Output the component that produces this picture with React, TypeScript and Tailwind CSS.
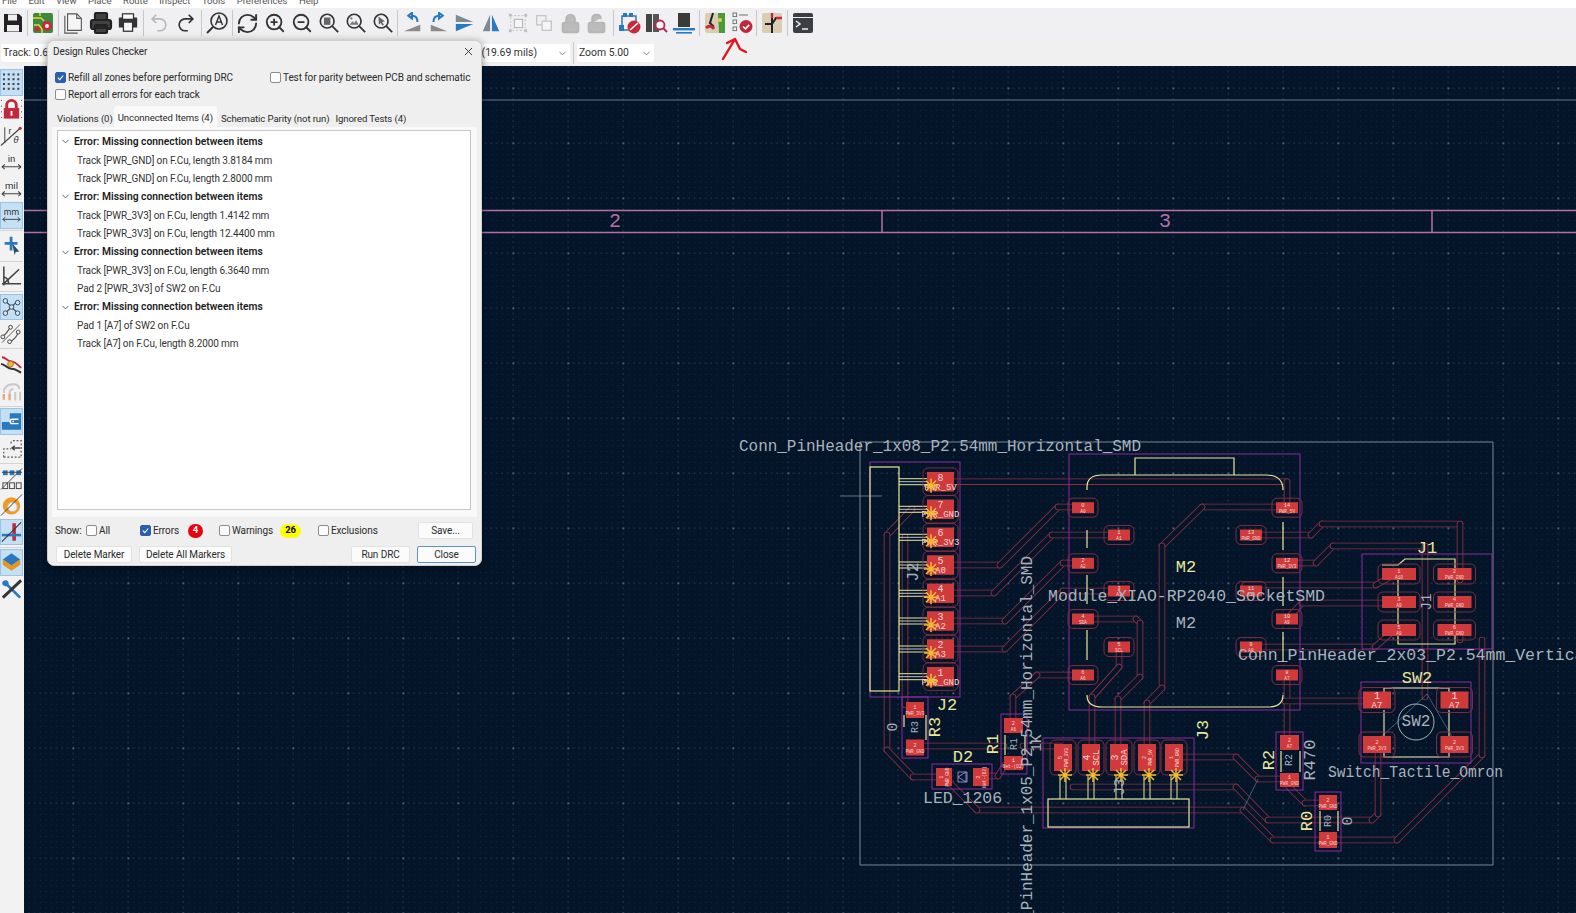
import { ChevronDown, Lock, LockOpen, Printer, RefreshCw, X, ZoomIn, ZoomOut } from "lucide-react";
import type { ReactNode } from "react";

const BG = "#04152a";
const TRACK = "#8a3040";
const COURT = "#8b2a9c";
const SILK = "#e8e79a";
const GREY = "#a9b2bb";

// ---------- small toolbar drawings ----------

function Ico({ children, size = 22 }: { children: ReactNode; size?: number }) {
  return (
    <svg width={size} height={size} viewBox="0 0 24 24" fill="none">
      {children}
    </svg>
  );
}

function Glass({ children }: { children?: ReactNode }) {
  return (
    <Ico>
      <circle cx="10" cy="10" r="7.5" stroke="#333" strokeWidth="1.8" />
      <path d="M15.5 15.5 22 22" stroke="#333" strokeWidth="2" />
      {children}
    </Ico>
  );
}

function Rotate({ flip }: { flip?: boolean }) {
  return (
    <Ico>
      <g transform={flip ? "translate(24 0) scale(-1 1)" : undefined}>
        <path d="M3 21 21 21 21 14Z" fill="#8a8a8a" />
        <path d="M8 4 12 1 12 7ZM12 4c4 0 6 3 6 7" stroke="#2a78c0" strokeWidth="2.2" fill="#2a78c0" fillOpacity="0" />
      </g>
    </Ico>
  );
}

const topIcons: Record<string, ReactNode> = {
  save: (
    <Ico size={24}>
      <path d="M3 3h15l3 3v15H3Z" fill="#222" />
      <rect x="7" y="3.5" width="9" height="6" fill="#eee" />
      <rect x="6" y="14" width="12" height="6.5" fill="#eee" />
    </Ico>
  ),
  board: (
    <Ico size={24}>
      <rect x="2" y="2" width="20" height="20" rx="2" fill="#3c8a3c" />
      <path d="M2 7h8l3 3M9 2v3M3 14h5l3 4v4" stroke="#e8d23a" strokeWidth="1.5" />
      <circle cx="16" cy="15" r="5" fill="#c92a3a" />
      <circle cx="16" cy="15" r="2" fill="#f2f2f2" />
      <circle cx="6" cy="18" r="2.6" fill="#c92a3a" />
    </Ico>
  ),
  page: (
    <Ico>
      <path d="M5 2h10l5 5v13H5Z" fill="#f6f6f6" stroke="#555" strokeWidth="1.2" />
      <path d="M15 2v5h5M2 4v19h14" stroke="#555" strokeWidth="1.2" />
    </Ico>
  ),
  print: <Printer size={24} color="#222" fill="#222" fillOpacity={0.85} strokeWidth={2.2} />,
  plot: (
    <Ico>
      <rect x="2" y="6" width="20" height="11" rx="1" fill="#333" />
      <rect x="6" y="2" width="12" height="6" fill="#fff" stroke="#333" strokeWidth="1.4" />
      <rect x="7" y="11" width="10" height="10" fill="#f4f4f4" stroke="#333" strokeWidth="1.4" />
    </Ico>
  ),
  undo: (
    <Ico>
      <path d="M9 3 4.5 7.5 9 12M5 7.5h8a6.5 6.5 0 0 1 0 13h-3" stroke="#b9b9b9" strokeWidth="1.8" />
    </Ico>
  ),
  redo: (
    <Ico>
      <path d="M15 3l4.5 4.5L15 12M19 7.5h-8a6.5 6.5 0 0 0 0 13h3" stroke="#333" strokeWidth="1.8" />
    </Ico>
  ),
  find: (
    <Ico size={24}>
      <circle cx="14" cy="10" r="8" stroke="#333" strokeWidth="1.6" />
      <path d="M8 16 2 22" stroke="#333" strokeWidth="2" />
      <path d="M10.5 14 14 5l3.5 9M11.7 11h4.6" stroke="#333" strokeWidth="1.4" />
    </Ico>
  ),
  refresh: <RefreshCw size={23} color="#333" strokeWidth={2} />,
  zin: <ZoomIn size={22} color="#333" strokeWidth={2} />,
  zout: <ZoomOut size={22} color="#333" strokeWidth={2} />,
  zfit: (
    <Glass>
      <rect x="6.5" y="6" width="7" height="8" fill="#666" />
    </Glass>
  ),
  zobj: (
    <Glass>
      <path d="M5 14l3-4 2 2 2-3 3 5Z" fill="#777" />
      <circle cx="7" cy="7" r="1.2" fill="#777" />
    </Glass>
  ),
  zsel: (
    <Glass>
      <path d="M7 5l7 5-3 1 2 3-1.5 1-2-3-2 2Z" fill="#666" />
    </Glass>
  ),
  rotl: <Rotate />,
  rotr: <Rotate flip />,
  mirh: (
    <Ico>
      <path d="M2 3 21 11 2 11Z" fill="#7c8a96" />
      <path d="M2 13h19L2 21Z" fill="#2a78c0" />
    </Ico>
  ),
  mirv: (
    <Ico>
      <path d="M11 3v18H3Z" fill="#7c8a96" />
      <path d="M13 3v18h8Z" fill="#2a78c0" />
    </Ico>
  ),
  group: (
    <Ico>
      <rect x="4" y="4" width="16" height="16" stroke="#c8c8c8" strokeWidth="1.2" strokeDasharray="2 2" />
      <rect x="2" y="2" width="3" height="3" fill="#bdbdbd" />
      <rect x="19" y="2" width="3" height="3" fill="#bdbdbd" />
      <rect x="2" y="19" width="3" height="3" fill="#bdbdbd" />
      <rect x="19" y="19" width="3" height="3" fill="#bdbdbd" />
      <rect x="8" y="8" width="9" height="9" fill="#f5f5f5" stroke="#bdbdbd" strokeWidth="1.4" />
    </Ico>
  ),
  ungroup: (
    <Ico>
      <rect x="4" y="4" width="10" height="10" stroke="#c4c4c4" strokeWidth="1.4" />
      <rect x="10" y="10" width="10" height="10" fill="#f5f5f5" stroke="#c4c4c4" strokeWidth="1.4" />
    </Ico>
  ),
  lock: <Lock size={21} color="#b5b5b5" fill="#b5b5b5" fillOpacity={0.9} strokeWidth={2.2} />,
  unlock: <LockOpen size={21} color="#b5b5b5" fill="#b5b5b5" fillOpacity={0.9} strokeWidth={2.2} />,
  netinsp: (
    <Ico size={24}>
      <path d="M4 5h14v14H4Z" stroke="#2a78c0" strokeWidth="1.5" />
      <rect x="5" y="2" width="4" height="4" fill="#2a78c0" />
      <rect x="11" y="2" width="4" height="4" fill="#2a78c0" />
      <rect x="1" y="14" width="5" height="6" fill="#2a78c0" />
      <circle cx="16" cy="16" r="6.5" fill="#c92a3a" />
      <path d="M12 19l8-7" stroke="#fff" strokeWidth="1.6" />
    </Ico>
  ),
  lib: (
    <Ico size={24}>
      <rect x="1" y="3" width="6" height="18" fill="#444" />
      <rect x="8" y="3" width="6" height="18" fill="#555" />
      <circle cx="15" cy="14" r="4.5" fill="#f5f5f5" stroke="#b02a55" strokeWidth="1.8" />
      <path d="M18 17l4 4" stroke="#b02a55" strokeWidth="2" />
    </Ico>
  ),
  stack: (
    <Ico size={24}>
      <rect x="6" y="2" width="12" height="14" fill="#3a3a3a" />
      <rect x="1" y="17" width="22" height="2.4" fill="#2a78c0" />
      <rect x="4" y="21" width="16" height="1.6" fill="#2a78c0" />
    </Ico>
  ),
  route: (
    <Ico size={24}>
      <rect x="2" y="2" width="20" height="20" rx="2" fill="#d9cdb4" />
      <path d="M15 2l7 0v20h-6Z" fill="#4a9a3c" />
      <path d="M10 2 7 12l4 4" stroke="#222" strokeWidth="2" />
      <path d="M3 17c3-3 6-2 8 1" stroke="#c92a3a" strokeWidth="3" />
      <circle cx="17" cy="9" r="2" fill="#e8d23a" />
    </Ico>
  ),
  drc: (
    <Ico size={24}>
      <rect x="3" y="2" width="3.6" height="3.6" stroke="#777" strokeWidth="1" />
      <rect x="3" y="9" width="3.6" height="3.6" stroke="#777" strokeWidth="1" />
      <rect x="3" y="16" width="3.6" height="3.6" stroke="#777" strokeWidth="1" />
      <path d="M9 4h9" stroke="#888" strokeWidth="1.2" />
      <circle cx="16" cy="15.5" r="6.5" fill="#c0283c" />
      <path d="M13 15.5l2.4 2.4 3.8-4" stroke="#fff" strokeWidth="1.7" />
    </Ico>
  ),
  pcbnew: (
    <Ico size={24}>
      <rect x="2" y="2" width="20" height="20" rx="2" fill="#d9cdb4" />
      <path d="M12 2v20M5 13h7l4-6h6" stroke="#222" strokeWidth="2" />
      <path d="M12 2v5M16 7h6" stroke="#c92a3a" strokeWidth="2.4" />
    </Ico>
  ),
  term: (
    <Ico size={24}>
      <rect x="2" y="2" width="20" height="20" rx="2" fill="#3b3f44" />
      <path d="M2 6.5h20" stroke="#eee" strokeWidth="1" />
      <path d="M5 10l4 3-4 3M11 18h6" stroke="#eee" strokeWidth="1.5" />
    </Ico>
  ),
};

type Tool = { key: string; active?: boolean; icon: ReactNode };

const unitTools: Tool[] = [
  {
    key: "grid",
    active: true,
    icon: (
      <svg width="22" height="22" viewBox="0 0 22 22">
        {[3, 8, 13, 18].map((y) =>
          [3, 8, 13, 18].map((x) => <rect key={`${x}-${y}`} x={x - 1} y={y - 1} width="2.2" height="2.2" fill="#3f4a55" />)
        )}
      </svg>
    ),
  },
  {
    key: "lockgrid",
    icon: (
      <Ico size={24}>
        <path d="M7 12V8a5 5 0 0 1 10 0v4" stroke="#c0283c" strokeWidth="3" />
        <rect x="4" y="11" width="16" height="11" fill="#c0283c" />
        <rect x="11" y="14" width="2" height="5" fill="#fff" />
        <path d="M1 3h1M1 9h1M1 15h1M1 21h1M22 3h1M22 9h1M22 15h1M22 21h1" stroke="#444" />
      </Ico>
    ),
  },
  {
    key: "polar",
    icon: (
      <svg width="24" height="24" viewBox="0 0 24 24" fill="none">
        <path d="M1 23 21 5" stroke="#444" strokeWidth="1.2" />
        <path d="M5 4v16" stroke="#444" />
        <circle cx="21" cy="5" r="1.6" fill="#c0283c" />
        <text x="9" y="11" fontSize="9" fill="#333" fontFamily="Liberation Sans, sans-serif">r</text>
        <text x="14" y="20" fontSize="9" fontStyle="italic" fill="#333" fontFamily="DejaVu Sans, sans-serif">θ</text>
      </svg>
    ),
  },
  ...["in", "mil", "mm"].map((u) => ({
    key: u,
    active: u === "mm",
    icon: (
      <svg width="24" height="24" viewBox="0 0 24 24" fill="none">
        <text x="12" y="12" textAnchor="middle" fontSize="10" fill="#333" fontFamily="Roboto, sans-serif">{u}</text>
        <path d="M2 17h20M2 17l3-2.4M2 17l3 2.4M22 17l-3-2.4M22 17l-3 2.4" stroke="#444" strokeWidth="1.1" />
      </svg>
    ),
  })),
];

const cursorTool: Tool = {
  key: "cursor",
  icon: (
    <Ico>
      <path d="M11 2v15M4 9h14" stroke="#2a78c0" strokeWidth="3" />
      <path d="M12 9l8 9-4 .6L15 22Z" fill="#26506f" />
    </Ico>
  ),
};

const axesTool: Tool = {
  key: "axes",
  icon: (
    <Ico size={24}>
      <path d="M4 2v20M2 20h20M4 20 20 5M4 13c4 1 5 4 5 7" stroke="#444" strokeWidth="1.6" />
    </Ico>
  ),
};

const netTools: Tool[] = [
  {
    key: "ratsnest",
    active: true,
    icon: (
      <Ico>
        <path d="M5 5l14 14M19 5 5 19" stroke="#2d3e50" strokeWidth="1.3" />
        <circle cx="5" cy="5" r="2.6" fill="#cfe4f6" stroke="#2d3e50" />
        <circle cx="19" cy="7" r="2.6" fill="#cfe4f6" stroke="#2d3e50" />
        <circle cx="12" cy="12" r="2.6" fill="#cfe4f6" stroke="#2d3e50" />
        <circle cx="5" cy="19" r="2.6" fill="#cfe4f6" stroke="#2d3e50" />
        <circle cx="19" cy="19" r="2.6" fill="#cfe4f6" stroke="#2d3e50" />
      </Ico>
    ),
  },
  {
    key: "curved",
    icon: (
      <Ico size={24}>
        <path d="M2 21 21 2" stroke="#555" strokeWidth="1" />
        <path d="M3 14c3-1 5-5 7-8M10 20c4-1 7-5 9-9" stroke="#555" strokeWidth="1.2" />
        <circle cx="3" cy="15" r="2" fill="#f0f0f0" stroke="#444" />
        <circle cx="11" cy="5" r="2" fill="#f0f0f0" stroke="#444" />
        <circle cx="10" cy="20" r="2" fill="#f0f0f0" stroke="#444" />
        <circle cx="19" cy="10" r="2" fill="#f0f0f0" stroke="#444" />
      </Ico>
    ),
  },
];

const routeTools: Tool[] = [
  {
    key: "route",
    icon: (
      <Ico size={24}>
        <path d="M2 5c4 0 6 4 9 4s6 2 11 7" stroke="#c0283c" strokeWidth="2" />
        <path d="M1 12c4 0 7 5 11 5s6 2 10 4" stroke="#333" strokeWidth="2" />
        <circle cx="11" cy="12" r="3" fill="#e8b93a" stroke="#b5792a" />
      </Ico>
    ),
  },
  {
    key: "tune",
    icon: (
      <Ico size={24}>
        <path d="M4 14c0-7 5-9 10-9s6 2 6 5M10 22v-8c0-3 2-4 4-4M16 22v-9M21 22v-9" stroke="#c8c8c8" strokeWidth="2" />
        <path d="M4 15v6M10 15v6" stroke="#f0a878" strokeWidth="2.4" />
      </Ico>
    ),
  },
];

const zoneTools: Tool[] = [
  {
    key: "zone",
    active: true,
    icon: (
      <Ico>
        <path d="M1 22V13h9V3h13v19Z" fill="#2a78c0" />
        <path d="M20 10h-7a2.5 2.5 0 0 0 0 5h7" stroke="#fff" strokeWidth="1.6" />
        <circle cx="14" cy="12.5" r="1" fill="#fff" />
      </Ico>
    ),
  },
  {
    key: "zoneout",
    icon: (
      <Ico>
        <path d="M3 22V13h8M11 5v4M13 4h9v18H3" stroke="#555" strokeWidth="1.3" strokeDasharray="2 2" />
        <path d="M21 12h-8M15 9.5 12 12l3 2.5" stroke="#444" strokeWidth="1.6" />
      </Ico>
    ),
  },
];

const padTools: Tool[] = [
  {
    key: "pads",
    icon: (
      <Ico size={24}>
        <rect x="3" y="3" width="5" height="5" fill="#2a78c0" />
        <rect x="10" y="3" width="5" height="5" fill="#2a78c0" />
        <rect x="17" y="3" width="5" height="5" fill="#2a78c0" />
        <path d="M2 5h21M1 23 23 1" stroke="#444" strokeWidth="1" />
        <rect x="3" y="16" width="5" height="6" stroke="#444" />
        <rect x="10" y="16" width="5" height="6" stroke="#444" />
        <rect x="17" y="16" width="5" height="6" stroke="#444" />
      </Ico>
    ),
  },
  {
    key: "via",
    icon: (
      <Ico size={24}>
        <circle cx="12" cy="13" r="9" fill="#f09a20" />
        <circle cx="13" cy="14" r="5" fill="#f0f0f0" stroke="#bbb" />
        <path d="M1 23 23 1" stroke="#444" strokeWidth="1" />
      </Ico>
    ),
  },
  {
    key: "tracks",
    active: true,
    icon: (
      <Ico size={22}>
        <path d="M13 2h4v20h-4Z" fill="#c0283c" />
        <path d="M1 14h22v3H1Z" fill="#2a78c0" />
        <path d="M1 23 23 1" stroke="#333" strokeWidth="1.2" />
      </Ico>
    ),
  },
];

const lastTools: Tool[] = [
  {
    key: "layers",
    active: true,
    icon: (
      <Ico size={22}>
        <path d="M12 2 22 9 12 16 2 9Z" fill="#2a78c0" />
        <path d="M2 9v6l10 7 10-7V9L12 16Z" fill="#e8951d" />
      </Ico>
    ),
  },
  {
    key: "tools",
    icon: (
      <Ico size={24}>
        <path d="M3 4c3-3 7 0 6 3l13 13-2 2L7 9C4 10 1 7 3 4Z" fill="#2a78c0" />
        <path d="M22 3 3 21" stroke="#333" strokeWidth="3" />
      </Ico>
    ),
  },
];

const sideGroups = [unitTools, [cursorTool], [axesTool], netTools, routeTools, zoneTools, padTools, lastTools];

// ---------- chrome ----------

function TopBtn({ name, w = "w-[27px]" }: { name: string; w?: string }) {
  return <div className={`flex h-full shrink-0 items-center justify-center ${w}`}>{topIcons[name]}</div>;
}

function Sep({ w = "w-[4px]" }: { w?: string }) {
  return (
    <div className={`flex h-full shrink-0 items-center justify-center ${w}`}>
      <div className="h-[26px] w-px bg-[#c8c8c8]" />
    </div>
  );
}

function Combo({ text, className }: { text: string; className: string }) {
  return (
    <div className={`flex h-[18px] shrink-0 items-center justify-between rounded-[2px] bg-white pl-[2px] pr-[2px] ${className}`}>
      <span className="whitespace-nowrap">{text}</span>
      <ChevronDown size={11} color="#777" />
    </div>
  );
}

function Check({ on, label, className = "" }: { on?: boolean; label: string; className?: string }) {
  return (
    <div className={`flex items-center gap-[2px] ${className}`}>
      <div
        className={`flex h-[11px] w-[11px] shrink-0 items-center justify-center rounded-[2px] border ${
          on ? "border-[#2a5fb0] bg-[#2a5fb0]" : "border-[#8d8d8d] bg-[#fbfbfb]"
        }`}
      >
        {on && (
          <svg width="9" height="9" viewBox="0 0 10 10" fill="none">
            <path d="M2 5.2 4.2 7.4 8 2.8" stroke="#fff" strokeWidth="1.2" />
          </svg>
        )}
      </div>
      <span className="whitespace-nowrap">{label}</span>
    </div>
  );
}

function Btn({ label, className, blue }: { label: string; className: string; blue?: boolean }) {
  return (
    <div
      className={`flex h-[17px] shrink-0 items-center justify-center rounded-[2px] border bg-[#fbfbfb] ${
        blue ? "border-[#5b93c4]" : "border-[#e2e2e2]"
      } ${className}`}
    >
      {label}
    </div>
  );
}

const groups = [
  ["Track [PWR_GND] on F.Cu, length 3.8184 mm", "Track [PWR_GND] on F.Cu, length 2.8000 mm"],
  ["Track [PWR_3V3] on F.Cu, length 1.4142 mm", "Track [PWR_3V3] on F.Cu, length 12.4400 mm"],
  ["Track [PWR_3V3] on F.Cu, length 6.3640 mm", "Pad 2 [PWR_3V3] of SW2 on F.Cu"],
  ["Pad 1 [A7] of SW2 on F.Cu", "Track [A7] on F.Cu, length 8.2000 mm"],
];

function DrcDialog() {
  return (
    <div className="absolute left-[47px] top-[40px] flex h-[526px] w-[435px] flex-col rounded-[7px] border border-[#cfcfcf] bg-[#efefef] text-[10px] tracking-[-0.1px] text-[#2b2b2b] shadow-[0_2px_8px_rgba(0,0,0,0.45)]">
      <div className="flex h-[21px] shrink-0 items-center justify-between pl-[5px] pr-[6px]">
        <span>Design Rules Checker</span>
        <X size={13} color="#222" strokeWidth={1.6} />
      </div>
      <div className="mt-[6px] flex h-[18px] shrink-0 items-center pl-[7px]">
        <Check on label="Refill all zones before performing DRC" className="w-[215px]" />
        <Check label="Test for parity between PCB and schematic" />
      </div>
      <div className="flex h-[16px] shrink-0 items-center pl-[7px]">
        <Check label="Report all errors for each track" />
      </div>
      <div className="mt-[4px] flex h-[21px] shrink-0 items-start pl-[5px] text-[9.6px]">
        <div className="shrink-0 pl-[4px] pr-[1px] pt-[7px] leading-[12px]">Violations (0)</div>
        <div className="h-[21px] shrink-0 rounded-t-[3px] bg-[#fafafa] px-[4px] pt-[6px] leading-[12px]">Unconnected Items (4)</div>
        <div className="ml-[1px] shrink-0 px-[3px] pt-[7px] leading-[12px]">Schematic Parity (not run)</div>
        <div className="shrink-0 px-[3px] pt-[7px] leading-[12px]">Ignored Tests (4)</div>
      </div>
      <div className="mx-[4px] flex h-[390px] shrink-0 bg-[#f9f9f9] px-[5px] pb-[7px] pt-[3px]">
        <div className="h-full w-[414px] border border-[#c6c6c6] bg-white pt-[1.5px]">
          {groups.map((g, i) => (
            <div key={i}>
              <div className="flex h-[18.4px] items-center text-[10.3px] font-semibold tracking-normal text-[#1c1c1c]">
                <ChevronDown size={11} color="#555" className="ml-[2px] mr-[3px]" />
                <span>Error: Missing connection between items</span>
              </div>
              {g.map((t) => (
                <div key={t} className="flex h-[18.4px] items-center pl-[19px] text-[#333]">
                  {t}
                </div>
              ))}
            </div>
          ))}
        </div>
      </div>
      <div className="flex h-[26px] shrink-0 items-center pl-[7px] pt-[1px]">
        <span className="w-[31px]">Show:</span>
        <Check label="All" className="w-[54px]" />
        <Check on label="Errors" className="w-[48px]" />
        <div className="flex h-[14px] w-[15px] items-center justify-center rounded-full bg-[#e8000f] text-[9.5px] font-bold text-white">4</div>
        <Check label="Warnings" className="ml-[16px] w-[61px]" />
        <div className="flex h-[14px] w-[21px] items-center justify-center rounded-full bg-[#ffff00] text-[9.5px] font-bold text-black">26</div>
        <Check label="Exclusions" className="ml-[17px] w-[100px]" />
        <Btn label="Save..." className="w-[55px]" />
      </div>
      <div className="flex h-[23px] shrink-0 items-center pl-[8px] pr-[5px]">
        <Btn label="Delete Marker" className="w-[76px]" />
        <Btn label="Delete All Markers" className="ml-[7px] w-[93px]" />
        <Btn label="Run DRC" className="ml-auto w-[59px]" />
        <Btn label="Close" blue className="ml-[7px] w-[59px]" />
      </div>
    </div>
  );
}

// ---------- the board ----------

// split an M/H/V/L path into straight runs, so each run gets its own round ends like KiCad's outline mode
function segments(d: string) {
  const tokens = d.match(/[MHVL]|-?[\d.]+/g) ?? [];
  const pts: [number, number][] = [];
  let cmd = "M";
  let i = 0;
  while (i < tokens.length) {
    if (/[MHVL]/.test(tokens[i])) cmd = tokens[i++];
    const last = pts[pts.length - 1];
    if (cmd === "H") pts.push([Number(tokens[i++]), last[1]]);
    else if (cmd === "V") pts.push([last[0], Number(tokens[i++])]);
    else {
      pts.push([Number(tokens[i]), Number(tokens[i + 1])]);
      i += 2;
    }
  }
  return pts.slice(1).map((p, k) => [pts[k], p]);
}

function Track({ d }: { d: string }) {
  return (
    <g strokeLinecap="round">
      {segments(d).map(([a, b], k) => (
        <g key={k}>
          <line x1={a[0]} y1={a[1]} x2={b[0]} y2={b[1]} stroke={TRACK} strokeWidth="6.6" />
          <line x1={a[0]} y1={a[1]} x2={b[0]} y2={b[1]} stroke={BG} strokeWidth="4.8" />
        </g>
      ))}
    </g>
  );
}

function Pad({
  x, y, w, h, n, net, big, vert, halo = true,
}: {
  x: number; y: number; w: number; h: number; n?: string; net?: string; big?: boolean; vert?: boolean; halo?: boolean;
}) {
  const numSize = big ? 10 : 5.5;
  const netSize = big ? 9 : 4.5;
  return (
    <g>
      {halo && (
        <rect x={x - w / 2 - 4} y={y - h / 2 - 4} width={w + 8} height={h + 8} rx="5" fill="none" stroke={TRACK} strokeWidth="0.9" />
      )}
      <rect x={x - w / 2} y={y - h / 2} width={w} height={h} fill="#d03a3a" />
      <g
        fill="#f5d9d9"
        fontFamily="Liberation Mono, monospace"
        textAnchor="middle"
        transform={vert ? `rotate(-90 ${x} ${y})` : undefined}
      >
        <text x={x} y={y - 1} fontSize={numSize}>{n}</text>
        <text x={x} y={y + (big ? 8 : 5)} fontSize={netSize}>{net}</text>
      </g>
    </g>
  );
}

function Label({
  x, y, t, len, size = 16, fill = GREY, rot,
}: {
  x: number; y: number; t: string; len?: number; size?: number; fill?: string; rot?: boolean;
}) {
  return (
    <text
      x={x}
      y={y}
      fill={fill}
      fontSize={size}
      fontFamily="Liberation Mono, monospace"
      textLength={len}
      lengthAdjust={len ? "spacingAndGlyphs" : undefined}
      dominantBaseline="central"
      textAnchor={len ? "start" : "middle"}
      transform={rot ? `rotate(-90 ${x} ${y})` : undefined}
    >
      {t}
    </text>
  );
}

function Star({ x, y }: { x: number; y: number }) {
  return (
    <path
      d={`M${x - 5} ${y - 5}l10 10M${x - 5} ${y + 5}l10 -10M${x} ${y - 7}v14M${x - 7} ${y}h14`}
      stroke="#f0bd32"
      strokeWidth="1.5"
    />
  );
}

const j2 = [
  [481.7, "8", "PWR_5V"], [509.3, "7", "PWR_GND"], [537.3, "6", "PWR_3V3"], [565, "5", "A0"],
  [593.3, "4", "A1"], [621, "3", "A2"], [649, "2", "A3"], [676.7, "1", "PWR_GND"],
] as const;

const j3 = [
  [1063, "5", "PWR_3V3"], [1091, "4", "SCL"], [1119, "3", "SDA"], [1147, "2", "PWR_5V"], [1174, "1", "PWR_GND"],
] as const;

const m2 = [
  [1083, 507.7, "0", "A0"], [1119, 535, "1", "A1"], [1083, 563.3, "2", "A2"], [1119, 591, "3", "A3"],
  [1083, 619, "4", "SDA"], [1119, 647, "5", "SCL"], [1083, 675, "6", "A6"],
  [1287, 507.7, "14", "PWR_5V"], [1251, 535, "13", "PWR_GND"], [1287, 563.3, "12", "PWR_3V3"], [1251, 591, "11", "A10"],
  [1287, 619, "10", "A9"], [1251, 647, "9", "A8"], [1287, 675, "8", "A7"],
] as const;

const j1 = [
  [1399, 574, "1", "A10"], [1454.5, 574, "2", "PWR_GND"], [1399, 602, "3", "A9"],
  [1454.5, 602, "4", "PWR_GND"], [1399, 630, "5", "A8"], [1454.5, 630, "6", "PWR_GND"],
] as const;

const tracks = [
  "M940 481.7H1287V507",
  "M945 565H1000L1058 507H1080",
  "M945 593H994L1052 535H1115",
  "M945 621H1005L1063 563H1080",
  "M945 649H1005L1063 591H1115",
  "M930 509H912L887 535V750L913 777H945",
  "M905 537V705",
  "M1080 675H1037L1013 697V725",
  "M1083 619H1136L1140 623V677L1118 699V750",
  "M1119 647V667L1092 697V750",
  "M1276 507H1202L1162 546V688L1147 703V750",
  "M1245 535H1311L1322 524H1460V580",
  "M1287 563H1316L1333 546H1425V697",
  "M1245 585H1376L1395 574",
  "M1287 619L1302 603H1395",
  "M1251 647H1375L1392 632",
  "M1287 680V745",
  "M1285 701H1375",
  "M924 746H1004",
  "M1023 746H1060",
  "M985 776H998L1005 765H1010",
  "M1180 757H1236L1258 779H1285",
  "M1073 787H1236L1268 820H1372L1378 814V745",
  "M977 810H1243L1273 840H1397L1482 755V640",
  "M977 810L945 778",
  "M1289 787L1305 803H1325",
  "M1460 630V640",
];

function PcbCanvas() {
  return (
    <svg className="block h-[847px] w-[1552px]" viewBox="24 66 1552 847">
      <defs>
        <pattern id="fine" x="18" y="33" width="5.5" height="5.5" patternUnits="userSpaceOnUse">
          <rect width="0.9" height="0.9" fill="#17293d" />
        </pattern>
        <pattern id="major" x="17.5" y="32.5" width="55" height="55" patternUnits="userSpaceOnUse">
          <path d="M0.5 0V55" stroke="#32465a" strokeWidth="1" strokeDasharray="1 4.5" />
          <path d="M0 0.5H55" stroke="#32465a" strokeWidth="1" strokeDasharray="1 4.5" />
          <rect width="1.5" height="1.5" fill="#8593a0" />
        </pattern>
      </defs>
      <rect x="24" y="66" width="1552" height="847" fill={BG} />
      <rect x="24" y="66" width="1552" height="847" fill="url(#fine)" />
      <rect x="24" y="66" width="1552" height="847" fill="url(#major)" />

      {/* sheet frame */}
      <path d="M24 100H1576" stroke="#66798b" strokeWidth="1" />
      <path d="M24 210.5H1576M24 232.5H1576M882 210V232M1432 210V232" stroke="#b66fa3" strokeWidth="1.5" />
      <Label x={615} y={221} t="2" size={20} fill="#b66fa3" />
      <Label x={1165} y={221} t="3" size={20} fill="#b66fa3" />

      {/* board edge */}
      <path d="M860 442H1493V865H860Z" fill="none" stroke="#7b8894" strokeWidth="1" />
      <path d="M840 496H882" stroke="#7b8894" strokeWidth="0.8" />

      {tracks.map((d) => (
        <Track key={d} d={d} />
      ))}
      <path d="M1258 779 1243 810M1427 694 1455 742M1376 742 1427 694" stroke="#4d7d93" strokeWidth="0.7" fill="none" />

      {/* courtyards */}
      <g fill="none" stroke={COURT} strokeWidth="1">
        <rect x="870" y="462" width="90" height="235" />
        <rect x="1069" y="454" width="231" height="256" />
        <rect x="1362" y="554" width="130" height="95" />
        <rect x="1361" y="682" width="110" height="81" />
        <rect x="1043" y="738" width="151" height="90" />
        <rect x="902" y="697" width="26" height="61" />
        <rect x="1001" y="714" width="26" height="60" />
        <rect x="932" y="764" width="60" height="25" />
        <rect x="1276" y="732" width="27" height="58" />
        <rect x="1315" y="792" width="26" height="59" />
      </g>

      {/* silk and fab */}
      <g fill="none" stroke={SILK} strokeWidth="1.2">
        <rect x="870" y="467" width="29" height="224" />
        <path d="M1135 475V458H1234V475" />
        <path d="M1087 490V487Q1087 475 1102 475H1266Q1283 475 1283 490M1087 695Q1087 707 1102 707H1268Q1283 707 1283 695" />
        <path d="M1087 530V548M1087 575V604M1087 630V660M1283 522V550M1283 577V606M1283 632V662" />
        <path d="M1382 565H1398L1405 559H1455V644H1398V570" />
        <rect x="1048" y="799" width="141" height="28" />
        <path d="M904 727V715M926 715V740M1005 735V755M1025 735V755M1281 751V772M1300 751V772M1320 811V831M1338 811V831" />
      </g>
      <path d="M1384 698V688H1449V698M1384 710V736M1449 710V736M1384 750V757H1449V750" fill="none" stroke="#a8a88e" strokeWidth="1.6" />
      <circle cx="1416" cy="722" r="18" fill="none" stroke={GREY} strokeWidth="1" />
      {j2.map(([y]) => (
        <path key={y} d={`M899 ${y - 3}H927M899 ${y + 3}H927`} stroke={SILK} strokeWidth="1" />
      ))}
      {j2.map(([y]) => (
        <path key={y} d={`M899 ${y}H927`} stroke="#eeeeee" strokeWidth="0.8" />
      ))}
      {j3.map(([x]) => (
        <path key={x} d={`M${x - 3} 775V799M${x + 3} 775V799`} stroke={SILK} strokeWidth="1" />
      ))}

      {/* pads */}
      {j2.map(([y, n, net]) => (
        <Pad key={n} x={940.5} y={y} w={27} h={19.5} n={n} net={net} big />
      ))}
      {j3.map(([x, n, net]) => (
        <Pad key={n} x={x} y={757.5} w={18} h={27} n={n} net={net} big={net.length < 4} vert />
      ))}
      {m2.map(([x, y, n, net]) => (
        <Pad key={n} x={x} y={y} w={22} h={11} n={n} net={net} />
      ))}
      {j1.map(([x, y, n, net]) => (
        <Pad key={n} x={x} y={y} w={34} h={12} n={n} net={net} />
      ))}
      <Pad x={1377} y={700} w={28} h={17} n="1" net="A7" big />
      <Pad x={1454.5} y={700} w={28} h={17} n="1" net="A7" big />
      <Pad x={1377} y={744.5} w={28} h={17} n="2" net="PWR_3V3" />
      <Pad x={1454.5} y={744.5} w={28} h={17} n="2" net="PWR_3V3" />
      <Pad x={915} y={710} w={18} h={16} n="1" net="PWR_3V3" halo={false} />
      <Pad x={915} y={747.5} w={18} h={16} n="2" net="PWR_GND" halo={false} />
      <Pad x={1013.5} y={725.5} w={19} h={15} n="2" net="A6" halo={false} />
      <Pad x={1013.5} y={763} w={19} h={14} n="1" net="Net-(D2)" halo={false} />
      <Pad x={944} y={777} w={16} h={18} n="1" net="PWR_GND" vert halo={false} />
      <Pad x={981} y={777} w={16} h={18} n="2" net="Net-(D2)" vert halo={false} />
      <Pad x={1289.5} y={742.5} w={19} h={15} n="2" net="A7" halo={false} />
      <Pad x={1289.5} y={780} w={19} h={14} n="1" net="PWR_GND" halo={false} />
      <Pad x={1328} y={802.5} w={18} h={15} n="2" net="PWR_GND" halo={false} />
      <Pad x={1328} y={840} w={18} h={16} n="1" net="PWR_GND" halo={false} />
      <path d="M958 772H967V782H958ZM958 777 966 772V782Z" fill="none" stroke="#9a8fd0" strokeWidth="0.9" />

      {j2.map(([y]) => (
        <Star key={y} x={931} y={y + 4} />
      ))}
      {j3.map(([x]) => (
        <Star key={x} x={x + 2} y={775} />
      ))}

      {/* texts */}
      <Label x={739} y={447} t="Conn_PinHeader_1x08_P2.54mm_Horizontal_SMD" len={402} />
      <Label x={1048} y={597} t="Module_XIAO-RP2040_SocketSMD" len={277} />
      <Label x={1186} y={623} t="M2" size={17} />
      <Label x={1186} y={567} t="M2" size={17} fill={SILK} />
      <Label x={1238} y={656} t="Conn_PinHeader_2x03_P2.54mm_Vertical_SMD" len={396} />
      <Label x={1328} y={773} t="Switch_Tactile_Omron" len={175} />
      <Label x={923} y={799} t="LED_1206" len={79} />
      <Label x={963} y={757} t="D2" size={17} fill={SILK} />
      <Label x={1417} y={678} t="SW2" size={17} fill={SILK} />
      <Label x={1416} y={722} t="SW2" size={16} />
      <Label x={1427} y={548} t="J1" size={17} fill={SILK} />
      <Label x={1427} y={602} t="J1" size={14} rot />
      <Label x={947} y={705} t="J2" size={17} fill={SILK} />
      <Label x={914} y={572} t="J2" size={16} rot />
      <Label x={1203} y={730} t="J3" size={17} fill={SILK} rot />
      <Label x={1120} y={787} t="J3" size={14} rot />
      <text
        x={1028}
        y={958}
        fill={GREY}
        fontSize={16}
        fontFamily="Liberation Mono, monospace"
        textLength={402}
        lengthAdjust="spacingAndGlyphs"
        dominantBaseline="central"
        transform="rotate(-90 1028 958)"
      >
        Conn_PinHeader_1x05_P2.54mm_Horizontal_SMD
      </text>
      <Label x={1037} y={743} t="1K" size={14} rot />
      <Label x={993} y={744} t="R1" size={17} fill={SILK} rot />
      <Label x={1014} y={744} t="R1" size={10} rot />
      <Label x={935} y={727} t="R3" size={17} fill={SILK} rot />
      <Label x={915} y={727} t="R3" size={10} rot />
      <Label x={893} y={727} t="0" size={15} rot />
      <Label x={1269} y={760} t="R2" size={17} fill={SILK} rot />
      <Label x={1289} y={760} t="R2" size={10} rot />
      <Label x={1310} y={760} t="R470" size={17} rot />
      <Label x={1307} y={821} t="R0" size={17} fill={SILK} rot />
      <Label x={1328} y={821} t="R0" size={10} rot />
      <Label x={1348} y={821} t="0" size={15} rot />
    </svg>
  );
}

function SideBtn({ active, icon }: { active?: boolean; icon: ReactNode }) {
  return (
    <div
      className={`flex h-[26.6px] w-[23px] shrink-0 items-center justify-center overflow-hidden ${
        active ? "border border-[#9cc3e4] bg-[#c5dff5]" : ""
      }`}
    >
      {icon}
    </div>
  );
}

export default function App() {
  return (
    <div className="relative flex h-[913px] w-[1576px] flex-col overflow-hidden bg-[#f0f0f0] font-['Roboto',sans-serif]">
      {/* menu, photographed with its top cut off */}
      <div className="flex h-[8px] shrink-0 gap-[11.5px] overflow-hidden bg-white pl-[2px] text-[9.5px] leading-[8px] text-[#555]">
        {["File", "Edit", "View", "Place", "Route", "Inspect", "Tools", "Preferences", "Help"].map((m) => (
          <span key={m} className="-mt-[3px] block">
            {m}
          </span>
        ))}
      </div>

      <div className="flex h-[32px] shrink-0 items-center bg-[#f0f0f2] pb-[2px]">
        <TopBtn name="save" w="w-[25px]" />
        <Sep />
        <TopBtn name="board" />
        <Sep />
        <TopBtn name="page" />
        <TopBtn name="print" />
        <TopBtn name="plot" />
        <Sep />
        <TopBtn name="undo" />
        <TopBtn name="redo" />
        <Sep />
        <TopBtn name="find" />
        <Sep />
        <TopBtn name="refresh" />
        <TopBtn name="zin" />
        <TopBtn name="zout" />
        <TopBtn name="zfit" />
        <TopBtn name="zobj" />
        <TopBtn name="zsel" />
        <Sep w="w-[3px]" />
        <TopBtn name="rotl" w="w-[26.4px]" />
        <TopBtn name="rotr" w="w-[26.4px]" />
        <TopBtn name="mirh" w="w-[26.4px]" />
        <TopBtn name="mirv" w="w-[26.4px]" />
        <TopBtn name="group" w="w-[26.4px]" />
        <TopBtn name="ungroup" w="w-[26.4px]" />
        <TopBtn name="lock" w="w-[26.4px]" />
        <TopBtn name="unlock" w="w-[26.4px]" />
        <Sep w="w-[6px]" />
        <TopBtn name="netinsp" />
        <TopBtn name="lib" />
        <TopBtn name="stack" />
        <Sep />
        <TopBtn name="route" />
        <TopBtn name="drc" />
        <Sep w="w-[3px]" />
        <TopBtn name="pcbnew" />
        <Sep />
        <TopBtn name="term" />
      </div>

      <div className="flex h-[26px] shrink-0 items-center gap-[3px] bg-[#f0f0f0] pl-[1px] text-[10.4px] text-[#333]">
        <Combo text="Track: 0.600 mm (23.62 mils)" className="w-[190px]" />
        <Combo text="Via: 0.8/0.4 mm" className="w-[120px]" />
        <Combo text="Grid: 0.5000 mm (19.69 mils)" className="w-[253px] justify-end gap-[20px]" />
        <div className="h-[22px] w-px bg-[#c8c8c8]" />
        <Combo text="Zoom 5.00" className="w-[77px]" />
      </div>

      <div className="flex min-h-0 flex-1">
        <div className="flex w-[24px] shrink-0 flex-col items-start bg-[#f2f2f2] pt-[3px]">
          {sideGroups.map((g, i) => (
            <div key={i} className={i > 0 ? "mt-[1.5px] border-t border-[#d4d4d4] pt-[1.5px]" : ""}>
              {g.map((t) => (
                <SideBtn key={t.key} active={t.active} icon={t.icon} />
              ))}
            </div>
          ))}
        </div>
        <PcbCanvas />
      </div>

      <DrcDialog />

      {/* hand-drawn arrow pointing at the DRC button */}
      <svg className="absolute left-[720px] top-[36px]" width="30" height="26" viewBox="0 0 30 26" fill="none">
        <path d="M3 23 15 3M7 7 15 3 20 13 26 16" stroke="#e4121c" strokeWidth="2.4" strokeLinecap="round" strokeLinejoin="round" />
      </svg>
    </div>
  );
}
